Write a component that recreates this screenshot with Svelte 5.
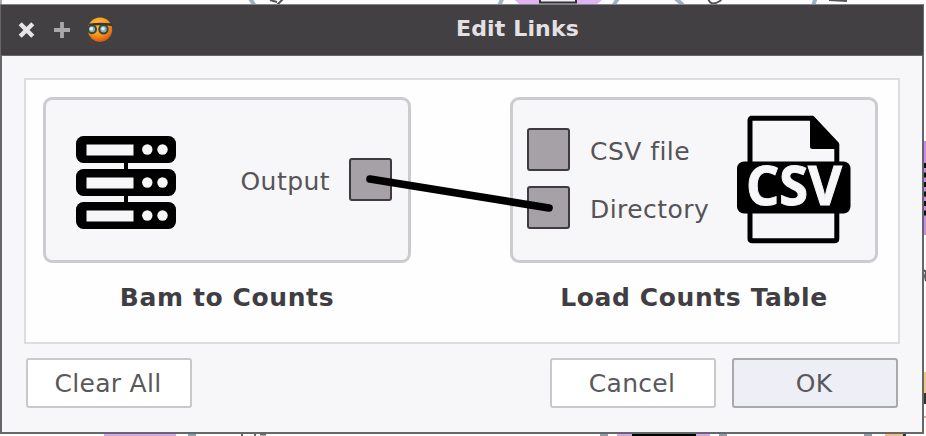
<script>
  let linked = $state(true);
  const units = [0, 33, 66];
</script>

<div class="desktop">
  <svg class="backdrop" width="926" height="436" viewBox="0 0 926 436">
    <rect width="926" height="436" fill="#fdfdfd" />
    <rect width="2" height="5" fill="#a9abb4" />
    <g fill="none" stroke-width="4">
      <path d="M249-3l6 9M503-3l-4 9M619-3l-6 9M674-3l9 8M816-3l-3 9" stroke="#9db4c0" />
      <path d="M270 0l7 2M284-2l-7 7M708-2q2 9 12 3l3-4M829 0l18 1" stroke="#555" stroke-width="2" />
    </g>
    <path d="M515 0h87l-6 5h-76z" fill="#dfb4f3" />
    <rect x="540" y="-4" width="36" height="6.500" fill="#eef2f2" stroke="#333" stroke-width="2" />
    <rect x="922" y="141" width="4" height="94" fill="#c98cec" />
    <path d="M925 163v54" stroke="#111" stroke-width="3" stroke-dasharray="5 4.5" />
    <path d="M924 270l2 2-1 4 1 5" stroke="#555" stroke-width="2" fill="none" />
    <rect x="923" y="372" width="3" height="26" fill="#f5c583" />
    <rect x="923" y="393" width="3" height="11" fill="#333" />
    <rect x="924" y="416" width="2" height="2" fill="#d7b18b" />
    <path d="M104 432h72v4h-72zM617 432h93v4h-93z" fill="#d7a2ef" />
    <path d="M632 432h64v4h-64z" fill="#000" />
    <path d="M188 434.5h8M600 434.5h8M719 434.5h8M864 434.5h8" stroke="#8d9ca5" stroke-width="3" />
    <path d="M242 433v3M255 433v3M260 434.5h6" stroke="#666" stroke-width="2" />
    <path d="M885 432h18v4h-18z" fill="#f3bd7c" />
    <path d="M903 432h3v4h-3z" fill="#333" />
  </svg>

  <section class="dialog">
    <header>
      <svg class="controls" width="100" height="30" viewBox="0 0 100 30">
        <defs>
          <radialGradient id="face" cx="42%" cy="30%" r="75%">
            <stop offset="0" stop-color="#ffc043" />
            <stop offset=".55" stop-color="#f79a1b" />
            <stop offset="1" stop-color="#cf4d16" />
          </radialGradient>
        </defs>
        <path d="M2.2 8.8l12.6 12.4M14.8 8.8L2.2 21.2" stroke="#e7e5e8" stroke-width="4.4" />
        <path d="M44 7v16M36 15h16" stroke="#aaa8ab" stroke-width="3.8" />
        <circle cx="82" cy="14.7" r="12.2" fill="url(#face)" />
        <path d="M71 10q11-2 23-.2" fill="none" stroke="#3c3427" stroke-width="2.400" />
        <circle cx="74" cy="14.2" r="4" fill="#7fb3bd" stroke="#3c4035" stroke-width="2" />
        <circle cx="85.5" cy="14.2" r="4.200" fill="#7fb3bd" stroke="#3c4035" stroke-width="2" />
        <circle cx="73.3" cy="13.8" r="1.8" fill="#d8f3f6" />
        <circle cx="85" cy="13.8" r="1.8" fill="#d8f3f6" />
      </svg>
      <h1>Edit Links</h1>
    </header>

    <main>
      <div class="canvas">
        <figure>
          <div class="node source">
            <svg width="102" height="96" viewBox="0 0 102 96">
              <path d="M51 20v60" stroke="#000" stroke-width="4" />
              {#each units as y}
                <g transform="translate(0 {y})">
                  <rect x="1" y="1" width="100" height="27" rx="7.5" />
                  <rect x="11.5" y="9.500" width="47" height="11" fill="#f7f6f9" />
                  <circle cx="72.3" cy="14.5" r="5.2" fill="#f7f6f9" />
                  <circle cx="87.5" cy="14.5" r="5.2" fill="#f7f6f9" />
                </g>
              {/each}
            </svg>
            <div class="port"><span>Output</span><i></i></div>
          </div>
          <figcaption>Bam to Counts</figcaption>
        </figure>
        <figure>
          <div class="node target">
            <div class="inputs">
              <div class="port"><i></i><span>CSV file</span></div>
              <div class="port"><i></i><span>Directory</span></div>
            </div>
            <svg width="114" height="130" viewBox="0 0 114 130">
              <path d="M13 3.2h62L99.800 30v93.500q0 2.300-2.300 2.300H15.300q-2.300 0-2.300-2.300V5.500q0-2.300 2.300-2.300z" fill="#f7f6f9" stroke="#000" stroke-width="5" />
              <path d="M74 1.500h3L102 28v6H75.500q-2.500 0-2.500-2.500V1.500z" />
              <rect x="0" y="46.500" width="113.500" height="52" rx="7" />
              <text x="9" y="89.500" textLength="96" lengthAdjust="spacingAndGlyphs">CSV</text>
            </svg>
          </div>
          <figcaption>Load Counts Table</figcaption>
        </figure>
        {#if linked}
          <svg class="link" width="872" height="262" viewBox="26 80 872 262">
            <path d="M370 179L549 208" stroke="#000" stroke-width="7.600" stroke-linecap="round" />
          </svg>
        {/if}
      </div>
      <footer>
        <button onclick={() => (linked = false)}>Clear All</button>
        <button class="cancel">Cancel</button>
        <button class="ok">OK</button>
      </footer>
    </main>
  </section>
</div>

<style>
  :global(body) { margin: 0; overflow: hidden; }
  * { box-sizing: border-box; }
  .desktop {
    position: relative;
    width: 926px;
    height: 436px;
    padding-top: 4px;
    overflow: hidden;
    font: 25px "DejaVu Sans", sans-serif;
    color: #555456;
  }
  .backdrop { position: absolute; inset: 0; }
  .dialog {
    position: relative;
    width: 924px;
    height: 430px;
    border: 2px solid #66676a;
    border-top: 1px solid #858487;
    background: #f7f6f8;
  }
  header {
    display: flex;
    align-items: center;
    height: 51px;
    padding-left: 17px;
    margin: 0 -1px;
    background: #434043;
    border-bottom: 1px solid #69676a;
  }
  .controls { flex: none; }
  h1 {
    margin: -2px 0 0 338px;
    font-size: 22px;
    line-height: 30px;
    letter-spacing: .15px;
    color: #e4e1e5;
    white-space: nowrap;
  }
  main { padding: 22px 22px 0; }
  .canvas {
    position: relative;
    display: flex;
    gap: 98px;
    height: 266px;
    padding: 17px 0 0 17px;
    border: 2px solid #dddcdf;
    background: #fefefe;
  }
  figure { width: 368px; margin: 0; }
  figure + figure { margin-left: 1px; }
  .node {
    display: flex;
    align-items: flex-start;
    justify-content: space-between;
    height: 166px;
    border: 3px solid #cecbd0;
    border-radius: 9px;
    background: #f7f6f9;
  }
  .source { padding: 35px 16px 0 29px; }
  .source .port { margin-top: 23px; }
  .target { padding: 15px 24px 0 14px; }
  .inputs { display: flex; flex-direction: column; gap: 16px; padding-top: 13px; }
  .port { display: flex; align-items: center; gap: 20px; height: 42px; letter-spacing: .45px; }
  .source .port { gap: 19px; }
  .port span { line-height: 42px; padding-top: 5px; }
  .port i { width: 43px; height: 43px; border: 2px solid #3d3b3f; border-radius: 3px; background: #a5a1a6; }
  text { font: bold 53px "Open Sans", "Noto Sans", sans-serif; fill: #f7f6f9; stroke: #f7f6f9; stroke-width: 1px; }
  figcaption {
    margin-top: 19px;
    text-align: center;
    font-weight: bold;
    font-size: 25px;
    line-height: 32px;
    letter-spacing: .6px;
    color: #403e42;
    white-space: nowrap;
  }
  .link { position: absolute; left: 0; top: 0; }
  footer { display: flex; padding: 14px 2px 0; }
  button {
    width: 166px;
    height: 50px;
    padding: 0 2px 0 0;
    border: 2px solid #c9c9c9;
    border-radius: 3px;
    background: #fff;
    font: 25px "DejaVu Sans", sans-serif;
    letter-spacing: .3px;
    color: #59585b;
  }
  .cancel { margin-left: auto; }
  .ok { margin-left: 16px; border-color: #a9a9ac; background: #eeeef7; }
</style>
